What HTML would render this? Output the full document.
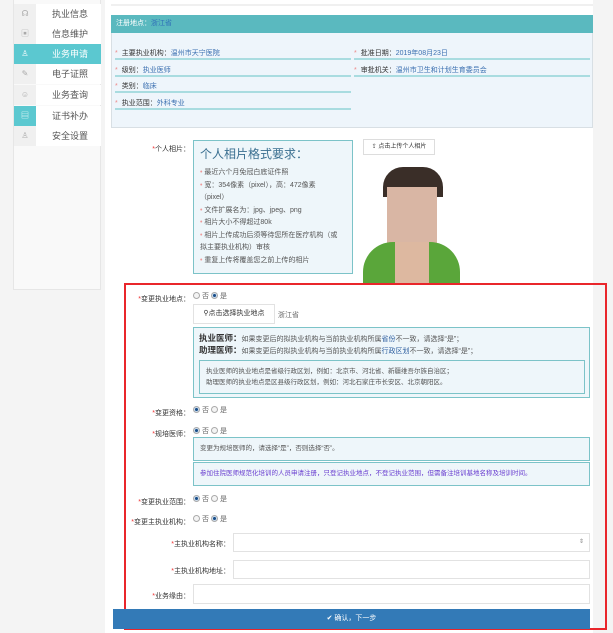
<!DOCTYPE html>
<html><head><meta charset="utf-8"><style>
*{box-sizing:border-box;margin:0;padding:0}
body{width:613px;height:633px;overflow:hidden;background:#f4f4f4;font-family:"Liberation Sans","Noto Sans CJK SC",sans-serif;font-size:8px;color:#333;position:relative}
.a{position:absolute}
.side{left:13px;top:-2px;width:88px;height:292px;background:#f9f9f9;border:1px solid #e6e6e6}
.mi{position:absolute;left:0;width:87px;height:20px;background:#fff;font-size:9px;color:#555}
.mi .ic{position:absolute;left:0;top:0;width:22px;height:20px;background:#f0f0f0;color:#aaa;text-align:center;line-height:20px;font-size:8px}
.mi .t{position:absolute;left:38px;top:0;line-height:20px}
.main{left:105px;top:0;width:488px;height:633px;background:#fff}
.lbl{position:absolute;text-align:right;font-size:7px;color:#333}
.lbl b{color:#e33;font-weight:normal}
.r{position:absolute;font-size:7px;color:#666}
.rb{display:inline-block;width:7px;height:7px;border:1px solid #aaa;border-radius:50%;vertical-align:-1px;margin-right:2px;background:#f4f4f4}
.rb.on{background:radial-gradient(#1a4f8a 40%,#cde 45%)}
.box{position:absolute;border:1px solid #7cc3c8;background:#eef6fa}
.inp{position:absolute;border:1px solid #e2e2e2;background:#fff}
.row{position:absolute;font-size:7px;color:#333;border-bottom:2px solid #a9dce0;height:12px}
.row i{color:#e88;font-style:normal;margin-right:4px}
.row span{color:#3a6fb0}
ul{list-style:none}
.req li{font-size:7px;color:#555;line-height:12.5px}
.req li:before{content:"• ";color:#e99}
</style></head><body>
<div class="a side">
 <div class="mi" style="top:5px"><div class="ic">☊</div><div class="t">执业信息</div></div>
 <div class="mi" style="top:25px"><div class="ic">▣</div><div class="t">信息维护</div></div>
 <div class="mi" style="top:45px;background:#5bc8d0;color:#fff"><div class="ic" style="background:#5bc8d0;color:#fff">♙</div><div class="t">业务申请</div></div>
 <div class="mi" style="top:65px"><div class="ic">✎</div><div class="t">电子证照</div></div>
 <div class="mi" style="top:86px"><div class="ic">☺</div><div class="t">业务查询</div></div>
 <div class="mi" style="top:107px"><div class="ic" style="background:#5bc8d0;color:#fff">▤</div><div class="t">证书补办</div></div>
 <div class="mi" style="top:127px"><div class="ic">♙</div><div class="t">安全设置</div></div>
</div>
<div class="a main"></div>
<div class="a" style="left:111px;top:4px;width:482px;height:2px;background:#f0f0f0"></div>
<div class="a" style="left:111px;top:15px;width:482px;height:113px;background:#eef5fb;border:1px solid #d8dfe4"></div>
<div class="a" style="left:111px;top:15px;width:482px;height:18px;background:#5ab9bf;color:#fff;font-size:7px;line-height:18px;padding-left:5px">注册地点：<span style="color:#2f6fb8">浙江省</span></div>
<div class="row" style="left:115px;top:48px;width:236px"><i>*</i>主要执业机构：<span>温州市天宁医院</span></div>
<div class="row" style="left:115px;top:65px;width:236px"><i>*</i>级别：<span>执业医师</span></div>
<div class="row" style="left:115px;top:81px;width:236px"><i>*</i>类别：<span>临床</span></div>
<div class="row" style="left:115px;top:98px;width:236px"><i>*</i>执业范围：<span>外科专业</span></div>
<div class="row" style="left:354px;top:48px;width:236px"><i>*</i>批准日期：<span>2019年08月23日</span></div>
<div class="row" style="left:354px;top:65px;width:236px"><i>*</i>审批机关：<span>温州市卫生和计划生育委员会</span></div>

<div class="lbl" style="left:130px;top:144px;width:60px"><b>*</b>个人相片：</div>
<div class="box" style="left:193px;top:140px;width:160px;height:134px;padding:4px 6px">
 <div style="font-size:12px;color:#3a6f90;margin-bottom:5px">个人相片格式要求：</div>
 <ul class="req"><li>最近六个月免冠白底证件照</li><li>宽：354像素（pixel），高：472像素</li></ul>
 <div style="font-size:7px;color:#555;line-height:12.5px">（pixel）</div>
 <ul class="req"><li>文件扩展名为：jpg、jpeg、png</li><li>相片大小不得超过80k</li><li>相片上传成功后须等待您所在医疗机构（或</li></ul>
 <div style="font-size:7px;color:#555;line-height:12.5px">拟主要执业机构）审核</div>
 <ul class="req"><li>重复上传将覆盖您之前上传的相片</li></ul>
</div>
<div class="a" style="left:363px;top:139px;width:72px;height:16px;border:1px solid #ddd;background:#fff;font-size:6px;line-height:14px;text-align:center">⇪ 点击上传个人相片</div>
<div class="a" style="left:363px;top:162px;width:97px;height:121px;background:linear-gradient(#fff 0,#fff 0) ;overflow:hidden">
 <div class="a" style="left:20px;top:5px;width:60px;height:30px;background:#3a2e28;border-radius:20px 20px 0 0"></div>
 <div class="a" style="left:24px;top:25px;width:50px;height:60px;background:#d9b6a4"></div>
 <div class="a" style="left:0;top:80px;width:97px;height:41px;background:#5aa63a;border-radius:30px 30px 0 0"></div>
 <div class="a" style="left:32px;top:80px;width:34px;height:41px;background:#ddb8a0"></div>
</div>

<div class="a" style="left:124px;top:283px;width:483px;height:347px;border:2px solid #e9262b"></div>

<div class="lbl" style="left:120px;top:294px;width:70px"><b>*</b>变更执业地点：</div>
<div class="r" style="left:193px;top:291px"><span class="rb"></span>否 <span class="rb on"></span>是</div>
<div class="inp" style="left:193px;top:304px;width:82px;height:20px;font-size:7px;line-height:18px;text-align:center;color:#333">⚲点击选择执业地点</div>
<div class="r" style="left:278px;top:310px">浙江省</div>
<div class="box" style="left:193px;top:327px;width:397px;height:71px;padding:5px 5px">
 <div style="font-size:7px;color:#555;line-height:11px"><b style="font-size:8.5px;color:#333">执业医师：</b>如果变更后的拟执业机构与当前执业机构所属<span style="color:#2f5fa0">省份</span>不一致，请选择“是”；</div>
 <div style="font-size:7px;color:#555;line-height:11px"><b style="font-size:8.5px;color:#333">助理医师：</b>如果变更后的拟执业机构与当前执业机构所属<span style="color:#2f5fa0">行政区划</span>不一致，请选择“是”；</div>
 <div style="position:absolute;left:5px;top:32px;width:386px;height:34px;border:1px solid #7cc3c8;font-size:6.5px;color:#555;line-height:11px;padding:5px 6px">执业医师的执业地点是省级行政区划，例如：北京市、河北省、新疆维吾尔族自治区；<br>助理医师的执业地点是区县级行政区划，例如：河北石家庄市长安区、北京朝阳区。</div>
</div>

<div class="lbl" style="left:120px;top:408px;width:70px"><b>*</b>变更资格：</div>
<div class="r" style="left:193px;top:405px"><span class="rb on"></span>否 <span class="rb"></span>是</div>
<div class="lbl" style="left:120px;top:429px;width:70px"><b>*</b>规培医师：</div>
<div class="r" style="left:193px;top:426px"><span class="rb on"></span>否 <span class="rb"></span>是</div>
<div class="box" style="left:193px;top:437px;width:397px;height:24px;font-size:6.5px;color:#555;line-height:22px;padding-left:6px">变更为规培医师的，请选择“是”，否则选择“否”。</div>
<div class="box" style="left:193px;top:462px;width:397px;height:24px;font-size:6.5px;color:#6a3fd0;line-height:22px;padding-left:6px">参加住院医师规范化培训的人员申请注册，只登记执业地点，不登记执业范围，但需备注培训基地名称及培训时间。</div>
<div class="lbl" style="left:110px;top:497px;width:80px"><b>*</b>变更执业范围：</div>
<div class="r" style="left:193px;top:494px"><span class="rb on"></span>否 <span class="rb"></span>是</div>
<div class="lbl" style="left:110px;top:517px;width:80px"><b>*</b>变更主执业机构：</div>
<div class="r" style="left:193px;top:514px"><span class="rb"></span>否 <span class="rb on"></span>是</div>
<div class="lbl" style="left:150px;top:539px;width:80px"><b>*</b>主执业机构名称：</div>
<div class="inp" style="left:233px;top:533px;width:357px;height:19px"><span style="position:absolute;right:5px;top:4px;font-size:6px;color:#888">⇕</span></div>
<div class="lbl" style="left:150px;top:566px;width:80px"><b>*</b>主执业机构地址：</div>
<div class="inp" style="left:233px;top:560px;width:357px;height:19px"></div>
<div class="lbl" style="left:120px;top:591px;width:70px"><b>*</b>业务缘由：</div>
<div class="inp" style="left:193px;top:584px;width:397px;height:20px"></div>
<div class="a" style="left:113px;top:609px;width:477px;height:20px;background:#337ab7;color:#fff;font-size:7px;line-height:20px;text-align:center">✔ 确认，下一步</div>
</body></html>
